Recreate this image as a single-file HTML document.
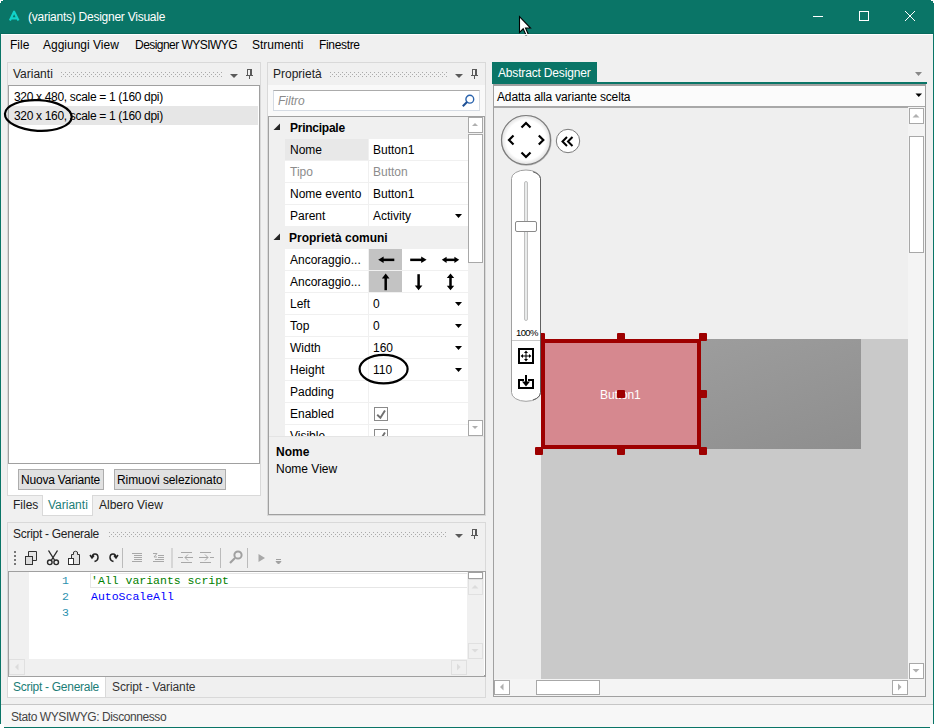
<!DOCTYPE html>
<html><head><meta charset="utf-8">
<style>
*{box-sizing:border-box;margin:0;padding:0}
html,body{width:934px;height:728px;overflow:hidden;background:#fff}
body{font-family:"Liberation Sans",sans-serif;font-size:12px;color:#000;position:relative}
.a{position:absolute}
.t{position:absolute;white-space:pre;line-height:14px}
#win{position:absolute;left:0;top:0;width:934px;height:728px;background:#f0f0f0;border:1px solid #0a7567;border-top:none}
#title{position:absolute;left:0;top:0;width:934px;height:34px;background:#0a7567;border-bottom:1px solid #076a5d}

</style></head><body>
<div id="win"></div>
<div id="title"></div>
<!-- rounded corners -->
<div class="a" style="left:0;top:0;width:3px;height:1px;background:#fff"></div>
<div class="a" style="left:0;top:0;width:1px;height:3px;background:#fff"></div>
<div class="a" style="left:931px;top:0;width:3px;height:1px;background:#fff"></div>
<div class="a" style="left:933px;top:0;width:1px;height:3px;background:#fff"></div>
<!-- title -->
<svg class="a" style="left:6px;top:8px" width="18" height="18"><path d="M3.9 12.5 L8.1 3.7 L12.5 12.5 M5.3 10.3 H11" stroke="#12d2c9" stroke-width="2.2" fill="none" stroke-linejoin="round"/></svg>
<div class="t" style="left:28px;top:10px;color:#fff;letter-spacing:-0.25px">(variants) Designer Visuale</div>
<!-- window controls -->
<svg class="a" style="left:800px;top:0" width="134" height="34">
<line x1="13" y1="16.5" x2="23" y2="16.5" stroke="#fff" stroke-width="1"/>
<rect x="59.5" y="11.5" width="9" height="9" fill="none" stroke="#fff" stroke-width="1"/>
<line x1="105" y1="11" x2="115" y2="21" stroke="#fff" stroke-width="1"/>
<line x1="115" y1="11" x2="105" y2="21" stroke="#fff" stroke-width="1"/>
</svg>
<!-- cursor -->
<svg class="a" style="left:518px;top:15px" width="16" height="22">
<path d="M1.5 1.5 V17.5 L5.2 13.8 L8 20 L10.2 19 L7.5 13 H12.5 Z" fill="#fff" stroke="#000" stroke-width="1.1" stroke-linejoin="miter"/>
</svg>
<!-- menu -->
<div class="a" style="left:1px;top:34px;width:932px;height:1px;background:#fff"></div>
<div class="t" style="left:10px;top:38px">File</div>
<div class="t" style="left:43px;top:38px">Aggiungi View</div>
<div class="t" style="left:135px;top:38px;letter-spacing:-0.54px">Designer WYSIWYG</div>
<div class="t" style="left:252px;top:38px">Strumenti</div>
<div class="t" style="left:319px;top:38px;letter-spacing:-0.33px">Finestre</div>


<!-- ===== Varianti panel ===== -->
<div class="a" style="left:7px;top:62px;width:254px;height:434px;border:1px solid #d9d9d9;background:#f0f0f0"></div>
<div class="t" style="left:13px;top:67px;color:#222">Varianti</div>
<svg class="a" style="left:61px;top:72px" width="162" height="6"><defs><pattern id="gp60_72" width="4" height="4" patternUnits="userSpaceOnUse"><rect x="0" y="0" width="1" height="1" fill="#ababab"/><rect x="2" y="2" width="1" height="1" fill="#ababab"/></pattern></defs><rect width="163" height="5" fill="url(#gp60_72)"/></svg>
<svg class="a" style="left:230px;top:73px" width="8" height="6"><path d="M0 1 L8 1 L4 5 Z" fill="#5a5a5a"/></svg>
<svg class="a" style="left:245px;top:68px" width="10" height="12"><rect x="2" y="1" width="5" height="1" fill="#5a5a5a"/><rect x="2" y="1" width="1" height="6" fill="#5a5a5a"/><rect x="5" y="1" width="2" height="6" fill="#5a5a5a"/><rect x="1" y="7" width="7" height="1" fill="#5a5a5a"/><rect x="4" y="8" width="1" height="3" fill="#5a5a5a"/></svg>
<div class="a" style="left:8px;top:85px;width:252px;height:379px;background:#fff;border:1px solid #a0a0a0;border-right-color:#a0a0a0"></div>
<div class="a" style="left:9px;top:106px;width:249px;height:19px;background:#e6e6e6"></div>
<div class="t" style="left:14px;top:90px;letter-spacing:-0.32px">320 x 480, scale = 1 (160 dpi)</div>
<div class="t" style="left:14px;top:109px;letter-spacing:-0.32px">320 x 160, scale = 1 (160 dpi)</div>
<div class="a" style="left:8px;top:464px;width:253px;height:32px;background:#fff;border-right:1px solid #d9d9d9;border-bottom:1px solid #d9d9d9"></div>
<div class="a" style="left:18px;top:469px;width:86px;height:21px;background:#e1e1e1;border:1px solid #adadad"></div>
<div class="t" style="left:21px;top:473px;letter-spacing:-0.2px">Nuova Variante</div>
<div class="a" style="left:114px;top:469px;width:112px;height:21px;background:#e1e1e1;border:1px solid #adadad"></div>
<div class="t" style="left:117px;top:473px;letter-spacing:-0.1px">Rimuovi selezionato</div>
<!-- tabs -->
<div class="a" style="left:42px;top:495px;width:51px;height:21px;background:#fff;border:1px solid #d9d9d9;border-top:none"></div>
<div class="t" style="left:13px;top:498px;color:#222">Files</div>
<div class="t" style="left:48px;top:498px;color:#1b7d76">Varianti</div>
<div class="t" style="left:99px;top:498px;color:#222">Albero View</div>

<!-- ===== Properties panel ===== -->
<div class="a" style="left:267px;top:62px;width:219px;height:454px;border:1px solid #d9d9d9;background:#f0f0f0"></div>
<div class="t" style="left:273px;top:67px;color:#222">Proprietà</div>
<svg class="a" style="left:330px;top:72px" width="118" height="6"><defs><pattern id="gp329_72" width="4" height="4" patternUnits="userSpaceOnUse"><rect x="0" y="0" width="1" height="1" fill="#ababab"/><rect x="2" y="2" width="1" height="1" fill="#ababab"/></pattern></defs><rect width="119" height="5" fill="url(#gp329_72)"/></svg>
<svg class="a" style="left:455px;top:73px" width="8" height="6"><path d="M0 1 L8 1 L4 5 Z" fill="#5a5a5a"/></svg>
<svg class="a" style="left:470px;top:68px" width="10" height="12"><rect x="2" y="1" width="5" height="1" fill="#5a5a5a"/><rect x="2" y="1" width="1" height="6" fill="#5a5a5a"/><rect x="5" y="1" width="2" height="6" fill="#5a5a5a"/><rect x="1" y="7" width="7" height="1" fill="#5a5a5a"/><rect x="4" y="8" width="1" height="3" fill="#5a5a5a"/></svg>
<div class="a" style="left:268px;top:85px;width:217px;height:31px;background:#f9f9f9"></div>
<div class="a" style="left:273px;top:90px;width:207px;height:21px;background:#fff;border:1px solid #d5dbe3;border-top-color:#ababab"></div>
<div class="t" style="left:278px;top:94px;color:#8a8a8a;font-style:italic">Filtro</div>
<svg class="a" style="left:460px;top:93px" width="16" height="16"><circle cx="9.8" cy="6.2" r="3.9" fill="none" stroke="#2a63ad" stroke-width="1.4"/><line x1="7" y1="9" x2="2.8" y2="13.2" stroke="#1d4f94" stroke-width="2"/></svg>
<div class="a" style="left:268px;top:116px;width:217px;height:399px;border:1px solid #a0a0a0;background:#f0f0f0"></div>
<div class="a" style="left:269px;top:117px;width:199px;height:319px;background:#f0f0f0;overflow:hidden">
<svg class="a" style="left:4px;top:6px" width="8" height="8"><path d="M7 0.5 L7 7 L0.5 7 Z" fill="#262626"/></svg><div class="t" style="left:21px;top:4px;font-weight:bold;letter-spacing:-0.25px">Principale</div><div class="a" style="left:16px;top:22px;width:83px;height:21px;background:#e8e8e8"></div><div class="a" style="left:100px;top:22px;width:99px;height:21px;background:#fff"></div><div class="t" style="left:21px;top:26px;color:#000">Nome</div><div class="t" style="left:104px;top:26px;color:#000">Button1</div><div class="a" style="left:16px;top:44px;width:83px;height:21px;background:#fff"></div><div class="a" style="left:100px;top:44px;width:99px;height:21px;background:#fff"></div><div class="t" style="left:21px;top:48px;color:#8c8c8c">Tipo</div><div class="t" style="left:104px;top:48px;color:#8c8c8c">Button</div><div class="a" style="left:16px;top:66px;width:83px;height:21px;background:#fff"></div><div class="a" style="left:100px;top:66px;width:99px;height:21px;background:#fff"></div><div class="t" style="left:21px;top:70px;color:#000">Nome evento</div><div class="t" style="left:104px;top:70px;color:#000">Button1</div><div class="a" style="left:16px;top:88px;width:83px;height:21px;background:#fff"></div><div class="a" style="left:100px;top:88px;width:99px;height:21px;background:#fff"></div><div class="t" style="left:21px;top:92px;color:#000">Parent</div><div class="t" style="left:104px;top:92px;color:#000">Activity</div><svg class="a" style="left:186px;top:97px" width="8" height="5"><path d="M0 0 L7 0 L3.5 4 Z" fill="#000"/></svg><svg class="a" style="left:4px;top:116px" width="8" height="8"><path d="M7 0.5 L7 7 L0.5 7 Z" fill="#262626"/></svg><div class="t" style="left:20px;top:114px;font-weight:bold">Proprietà comuni</div><div class="a" style="left:16px;top:132px;width:83px;height:21px;background:#fff"></div><div class="a" style="left:100px;top:132px;width:99px;height:21px;background:#fff"></div><div class="a" style="left:100px;top:132px;width:33px;height:21px;background:#c3c3c3"></div><div class="t" style="left:21px;top:136px">Ancoraggio...</div><svg class="a" style="left:100px;top:132px" width="99" height="21"><g fill="#000"><rect x="13" y="9.6" width="12.3" height="2.5"/><path d="M9.2 10.85 L14.6 7.6 L14.6 14.1 Z"/><rect x="41.2" y="9.6" width="12.3" height="2.5"/><path d="M57.6 10.85 L52.2 7.6 L52.2 14.1 Z"/><rect x="76" y="9.6" width="11" height="2.5"/><path d="M72.8 10.85 L77.6 7.8 L77.6 13.9 Z M90.2 10.85 L85.4 7.8 L85.4 13.9 Z"/></g></svg><div class="a" style="left:16px;top:154px;width:83px;height:21px;background:#fff"></div><div class="a" style="left:100px;top:154px;width:99px;height:21px;background:#fff"></div><div class="a" style="left:100px;top:154px;width:33px;height:21px;background:#c3c3c3"></div><div class="t" style="left:21px;top:158px">Ancoraggio...</div><svg class="a" style="left:100px;top:154px" width="99" height="21"><g fill="#000"><rect x="15.45" y="6" width="2.5" height="13.2"/><path d="M16.7 2.6 L12.9 7.4 L20.5 7.4 Z"/><rect x="48.35" y="3.2" width="2.5" height="13"/><path d="M49.6 19.2 L45.8 14.4 L53.4 14.4 Z"/><rect x="80.25" y="5.5" width="2.5" height="11"/><path d="M81.5 2.5 L77.8 7 L85.2 7 Z M81.5 19.2 L77.8 14.7 L85.2 14.7 Z"/></g></svg><div class="a" style="left:16px;top:176px;width:83px;height:21px;background:#fff"></div><div class="a" style="left:100px;top:176px;width:99px;height:21px;background:#fff"></div><div class="t" style="left:21px;top:180px">Left</div><div class="t" style="left:104px;top:180px">0</div><svg class="a" style="left:186px;top:185px" width="8" height="5"><path d="M0 0 L7 0 L3.5 4 Z" fill="#000"/></svg><div class="a" style="left:16px;top:198px;width:83px;height:21px;background:#fff"></div><div class="a" style="left:100px;top:198px;width:99px;height:21px;background:#fff"></div><div class="t" style="left:21px;top:202px">Top</div><div class="t" style="left:104px;top:202px">0</div><svg class="a" style="left:186px;top:207px" width="8" height="5"><path d="M0 0 L7 0 L3.5 4 Z" fill="#000"/></svg><div class="a" style="left:16px;top:220px;width:83px;height:21px;background:#fff"></div><div class="a" style="left:100px;top:220px;width:99px;height:21px;background:#fff"></div><div class="t" style="left:21px;top:224px">Width</div><div class="t" style="left:104px;top:224px">160</div><svg class="a" style="left:186px;top:229px" width="8" height="5"><path d="M0 0 L7 0 L3.5 4 Z" fill="#000"/></svg><div class="a" style="left:16px;top:242px;width:83px;height:21px;background:#fff"></div><div class="a" style="left:100px;top:242px;width:99px;height:21px;background:#fff"></div><div class="t" style="left:21px;top:246px">Height</div><div class="t" style="left:104px;top:246px">110</div><svg class="a" style="left:186px;top:251px" width="8" height="5"><path d="M0 0 L7 0 L3.5 4 Z" fill="#000"/></svg><div class="a" style="left:16px;top:264px;width:83px;height:21px;background:#fff"></div><div class="a" style="left:100px;top:264px;width:99px;height:21px;background:#fff"></div><div class="t" style="left:21px;top:268px">Padding</div><div class="a" style="left:16px;top:286px;width:83px;height:21px;background:#fff"></div><div class="a" style="left:100px;top:286px;width:99px;height:21px;background:#fff"></div><div class="t" style="left:21px;top:290px">Enabled</div><svg class="a" style="left:105px;top:290px" width="15" height="15"><rect x="0.5" y="0.5" width="13" height="13" fill="#fff" stroke="#8a8a8a"/><path d="M3.2 7.8 L6.4 10.8 L11 3.4" stroke="#707070" stroke-width="1.9" fill="none"/></svg><div class="a" style="left:16px;top:308px;width:83px;height:21px;background:#fff"></div><div class="a" style="left:100px;top:308px;width:99px;height:21px;background:#fff"></div><div class="t" style="left:21px;top:312px">Visible</div><svg class="a" style="left:105px;top:312px" width="15" height="15"><rect x="0.5" y="0.5" width="13" height="13" fill="#fff" stroke="#8a8a8a"/><path d="M3.2 7.8 L6.4 10.8 L11 3.4" stroke="#707070" stroke-width="1.9" fill="none"/></svg></div>
<div class="a" style="left:468px;top:117px;width:16px;height:319px;background:#f0f0f0"></div>
<div class="a" style="left:468px;top:117px;width:15px;height:16px;background:#fff;border:1px solid #a8a8a8"></div>
<svg class="a" style="left:472px;top:122px" width="8" height="6"><path d="M0 4 L6 4 L3 1 Z" fill="#b0b0b0"/></svg>
<div class="a" style="left:468px;top:134px;width:15px;height:129px;background:#fff;border:1px solid #a8a8a8"></div>
<div class="a" style="left:468px;top:420px;width:15px;height:16px;background:#fff;border:1px solid #a8a8a8"></div>
<svg class="a" style="left:472px;top:425px" width="8" height="6"><path d="M0 1 L6 1 L3 4 Z" fill="#b0b0b0"/></svg>
<div class="a" style="left:269px;top:436px;width:215px;height:1px;background:#e4e4e4"></div>
<div class="t" style="left:276px;top:445px;font-weight:bold">Nome</div>
<div class="t" style="left:276px;top:462px">Nome View</div>

<!-- ===== Designer ===== -->
<div class="a" style="left:492px;top:62px;width:105px;height:21px;background:#0a7567"></div>
<div class="t" style="left:498px;top:66px;color:#fff;letter-spacing:-0.17px">Abstract Designer</div>
<svg class="a" style="left:914px;top:71px" width="10" height="7"><path d="M1 1 L8 1 L4.5 5 Z" fill="#888"/></svg>
<div class="a" style="left:492px;top:82px;width:435px;height:2px;background:#0a7567"></div>
<div class="a" style="left:493px;top:84px;width:433px;height:613px;border:1px solid #a0a0a0;border-width:2px 2px 2px 1px;background:#efefef"></div>
<div class="a" style="left:494px;top:86px;width:431px;height:22px;background:#fbfbfb;border-bottom:2px solid #a8a8a8"></div>
<div class="t" style="left:497px;top:90px;letter-spacing:-0.15px">Adatta alla variante scelta</div>
<svg class="a" style="left:915px;top:93px" width="8" height="6"><path d="M0.5 0.5 L7 0.5 L3.75 4 Z" fill="#000"/></svg>
<!-- canvas -->
<div class="a" style="left:541px;top:339px;width:367px;height:340px;background:#c9c9c9"></div>
<div class="a" style="left:541px;top:339px;width:320px;height:110px;background:linear-gradient(160deg,#a2a2a2,#8e8e8e)"></div>
<div class="a" style="left:541px;top:339px;width:160px;height:110px;background:#d6888f;border:4px solid #9e0000"></div>
<div class="t" style="left:600px;top:388px;color:#fff;letter-spacing:-0.1px">Button1</div>
<div class="a" style="left:537px;top:333px;width:8px;height:8px;background:#9e0000;border-radius:1px"></div>
<div class="a" style="left:617px;top:333px;width:8px;height:8px;background:#9e0000;border-radius:1px"></div>
<div class="a" style="left:699px;top:333px;width:8px;height:8px;background:#9e0000;border-radius:1px"></div>
<div class="a" style="left:699px;top:390px;width:8px;height:8px;background:#9e0000;border-radius:1px"></div>
<div class="a" style="left:617px;top:390px;width:8px;height:8px;background:#9e0000;border-radius:1px"></div>
<div class="a" style="left:535px;top:447px;width:8px;height:8px;background:#9e0000;border-radius:1px"></div>
<div class="a" style="left:617px;top:447px;width:8px;height:8px;background:#9e0000;border-radius:1px"></div>
<div class="a" style="left:699px;top:447px;width:8px;height:8px;background:#9e0000;border-radius:1px"></div>
<!-- scrollbars -->
<div class="a" style="left:908px;top:107px;width:17px;height:572px;background:#f4f4f4"></div>
<div class="a" style="left:494px;top:679px;width:431px;height:17px;background:#f4f4f4"></div>
<div class="a" style="left:909px;top:108px;width:15px;height:16px;background:#fff;border:1px solid #a8a8a8"></div>
<svg class="a" style="left:912px;top:113px" width="9" height="6"><path d="M0.5 4.5 L7.5 4.5 L4 1 Z" fill="#b0b0b0"/></svg>
<div class="a" style="left:909px;top:136px;width:15px;height:117px;background:#fff;border:1px solid #a8a8a8"></div>
<div class="a" style="left:909px;top:663px;width:15px;height:16px;background:#fff;border:1px solid #a8a8a8"></div>
<svg class="a" style="left:912px;top:668px" width="9" height="6"><path d="M0.5 1 L7.5 1 L4 4.5 Z" fill="#b0b0b0"/></svg>
<div class="a" style="left:494px;top:680px;width:16px;height:15px;background:#fff;border:1px solid #a8a8a8"></div>
<svg class="a" style="left:499px;top:683px" width="6" height="9"><path d="M4.5 0.5 L4.5 7.5 L1 4 Z" fill="#b0b0b0"/></svg>
<div class="a" style="left:536px;top:680px;width:64px;height:15px;background:#fff;border:1px solid #a8a8a8"></div>
<div class="a" style="left:892px;top:680px;width:16px;height:15px;background:#fff;border:1px solid #a8a8a8"></div>
<svg class="a" style="left:897px;top:683px" width="6" height="9"><path d="M1 0.5 L1 7.5 L4.5 4 Z" fill="#b0b0b0"/></svg>
<!-- navigator -->
<svg class="a" style="left:495px;top:108px" width="100" height="300">
<defs><radialGradient id="cg" cx="50%" cy="50%" r="50%"><stop offset="80%" stop-color="#fff"/><stop offset="100%" stop-color="#e2e2e2"/></radialGradient></defs>
<circle cx="31.3" cy="32.4" r="24.6" fill="none" stroke="#9a9a9a" stroke-width="1.4" opacity="0.7"/><circle cx="31" cy="32" r="24.5" fill="url(#cg)" stroke="#7c7c7c" stroke-width="1.2"/>
<path d="M26.5 19.5 L31 15 L35.5 19.5" stroke="#000" stroke-width="2.2" fill="none"/>
<path d="M26.5 44.5 L31 49 L35.5 44.5" stroke="#000" stroke-width="2.2" fill="none"/>
<path d="M18.5 27.5 L14 32 L18.5 36.5" stroke="#000" stroke-width="2.2" fill="none"/>
<path d="M43.8 27.5 L48.3 32 L43.8 36.5" stroke="#000" stroke-width="2.2" fill="none"/>
<circle cx="73" cy="33" r="11.7" fill="#fff" stroke="#7a7a7a" stroke-width="1"/>
<path d="M72 29 L67.5 33.5 L72 38 M77.5 29 L73 33.5 L77.5 38" stroke="#000" stroke-width="2" fill="none"/>
<path d="M16.5 70.5 A14.5 8.5 0 0 1 45.5 70.5 V284.5 A14.5 8.8 0 0 1 16.5 284.5 Z" fill="#fff" stroke="#a0a0a0" stroke-width="1"/>
<path d="M38 63.8 A14.5 8.5 0 0 1 45.5 70.5 V284.5 A14.5 8.8 0 0 1 38 292" fill="none" stroke="#606060" stroke-width="1"/>
<rect x="29.5" y="73.5" width="3" height="139" rx="1.5" fill="#e8eaea" stroke="#c0c0c0" stroke-width="1"/>
<rect x="20.5" y="113.5" width="21" height="10" rx="1.5" fill="#fff" stroke="#8a8a8a" stroke-width="1"/>
<line x1="17" y1="232.5" x2="45" y2="232.5" stroke="#c8c8c8"/>
<rect x="24" y="241" width="14" height="14" fill="none" stroke="#000" stroke-width="2"/>
<path d="M31 244.5 V251.5 M27.5 248 H34.5" stroke="#000" stroke-width="1"/>
<path d="M31 242.6 L29 245 H33 Z M31 253.4 L29 251 H33 Z M25.6 248 L28 246 V250 Z M36.4 248 L34 246 V250 Z" fill="#000"/>
<path d="M29 272 H24 V280 H38 V272 H33" stroke="#000" stroke-width="2" fill="none"/>
<path d="M31 267 V275" stroke="#000" stroke-width="2"/>
<path d="M27 273.5 H35 L31 278.5 Z" fill="#000"/>
</svg>
<div class="t" style="left:516px;top:327px;font-size:9.5px;line-height:11px;letter-spacing:-0.65px">100%</div>

<!-- ===== Script panel ===== -->
<div class="a" style="left:7px;top:522px;width:479px;height:176px;border:1px solid #d9d9d9;background:#f0f0f0"></div>
<div class="t" style="left:13px;top:527px;color:#222;letter-spacing:-0.28px">Script - Generale</div>
<svg class="a" style="left:109px;top:532px" width="338" height="6"><defs><pattern id="gp108_531" width="4" height="4" patternUnits="userSpaceOnUse"><rect x="0" y="0" width="1" height="1" fill="#ababab"/><rect x="2" y="2" width="1" height="1" fill="#ababab"/></pattern></defs><rect width="339" height="5" fill="url(#gp108_531)"/></svg>
<svg class="a" style="left:455px;top:533px" width="8" height="6"><path d="M0 1 L8 1 L4 5 Z" fill="#5a5a5a"/></svg>
<svg class="a" style="left:470px;top:528px" width="10" height="12"><rect x="2" y="1" width="5" height="1" fill="#5a5a5a"/><rect x="2" y="1" width="1" height="6" fill="#5a5a5a"/><rect x="5" y="1" width="2" height="6" fill="#5a5a5a"/><rect x="1" y="7" width="7" height="1" fill="#5a5a5a"/><rect x="4" y="8" width="1" height="3" fill="#5a5a5a"/></svg>
<!-- toolbar -->
<svg class="a" style="left:8px;top:545px" width="290" height="26">
<g fill="#777"><rect x="6" y="6" width="2" height="2"/><rect x="6" y="10" width="2" height="2"/><rect x="6" y="14" width="2" height="2"/><rect x="6" y="18" width="2" height="2"/></g>
<g stroke="#333" stroke-width="1" fill="none">
<path d="M20.5 11.5 V6.5 H28.5 V15.5 H24.5" fill="#e6e6e6"/><rect x="17.5" y="11.5" width="7" height="8" fill="#dcdcdc"/>
</g>
<g stroke="#2a2a2a" stroke-width="1.4" fill="none">
<path d="M40.5 5.5 L46.5 15 M49.5 5.5 L43.5 15"/><circle cx="41.8" cy="17.3" r="2.3"/><circle cx="48.2" cy="17.3" r="2.3"/>
</g>
<g stroke="#333" stroke-width="1" fill="none">
<path d="M63.5 19.5 H71.5 V9.5 H69.5 V7 Q67.5 5.5 65.5 7 V9.5 H63.5 Z" fill="#e2e2e2"/><rect x="60.5" y="13.5" width="5" height="6" fill="#fff"/>
</g>
<path d="M84 13 Q84 9 87 9 Q90 9 90 12.5 Q90 15.5 86.5 16.5 M82 10 L84 13 L86 10.5" stroke="#222" stroke-width="1.5" fill="none"/>
<path d="M108 13 Q108 9 105 9 Q102 9 102 12.5 Q102 15.5 105.5 16.5 M110 10 L108 13 L106 10.5" stroke="#222" stroke-width="1.5" fill="none"/>
<g fill="#bbb"><rect x="114" y="3" width="1" height="20"/><rect x="163.5" y="3" width="1" height="20"/><rect x="212" y="3" width="1" height="20"/><rect x="239" y="3" width="1" height="20"/></g>
<g stroke="#a8a8a8" stroke-width="1" fill="none">
<path d="M124 8.5 H134 M126 10.5 H134 M126 12.5 H134 M126 14.5 H134 M124 16.5 H134"/>
<path d="M145 8.5 H149 L146 12 H149 M150 10.5 H156 M150 12.5 H156 M147 14.5 H156 M145 16.5 H156"/>
<path d="M173 7.5 H184 M170 12.5 H175 M177 12.5 H185 M173 17.5 H184 M180 9.5 L177 12.5 L180 15.5"/>
<path d="M192 7.5 H203 M191 12.5 H200 M202 12.5 H206 M192 17.5 H203 M197 9.5 L200 12.5 L197 15.5"/>
</g>
<circle cx="230" cy="10" r="3.6" stroke="#a0a0a0" stroke-width="2" fill="none"/>
<path d="M227 13 L222 18" stroke="#a0a0a0" stroke-width="2.2"/>
<path d="M250.5 9 V17 L257 13 Z" fill="#a8a8a8"/>
<path d="M268 14.5 H273 M268 16.5 L270.5 19 L273 16.5 Z" stroke="#a0a0a0" stroke-width="1" fill="#a0a0a0"/>
</svg>
<!-- editor -->
<div class="a" style="left:8px;top:571px;width:478px;height:106px;border:1px solid #a0a0a0;border-width:1px 1px 2px 1px;background:#fff"></div>
<div class="a" style="left:9px;top:572px;width:20px;height:87px;background:#f0f0f0"></div>
<div class="a" style="left:90px;top:573px;width:377px;height:15px;border:1px solid #e6e6e6;border-right:none"></div>
<div class="a" style="left:9px;top:659px;width:475px;height:17px;background:#f0f0f0"></div>
<div class="a" style="left:467px;top:572px;width:17px;height:88px;background:#f0f0f0"></div>
<div class="a" style="left:468px;top:572px;width:15px;height:7px;background:#fff;border:1px solid #a0a0a0"></div>
<div class="a" style="left:468px;top:579px;width:15px;height:16px;border:1px solid #e0e0e0"></div>
<svg class="a" style="left:471px;top:584px" width="9" height="6"><path d="M0.5 4.5 L7.5 4.5 L4 1 Z" fill="#dcdcdc"/></svg>
<div class="a" style="left:468px;top:643px;width:15px;height:16px;border:1px solid #e0e0e0"></div>
<svg class="a" style="left:471px;top:648px" width="9" height="6"><path d="M0.5 1 L7.5 1 L4 4.5 Z" fill="#dcdcdc"/></svg>
<div class="a" style="left:9px;top:659px;width:16px;height:16px;border:1px solid #e0e0e0"></div>
<svg class="a" style="left:14px;top:663px" width="6" height="9"><path d="M4.5 0.5 L4.5 7.5 L1 4 Z" fill="#dcdcdc"/></svg>
<div class="a" style="left:451px;top:660px;width:16px;height:15px;border:1px solid #e0e0e0"></div>
<svg class="a" style="left:456px;top:663px" width="6" height="9"><path d="M1 0.5 L1 7.5 L4.5 4 Z" fill="#dcdcdc"/></svg>
<div class="t" style="left:62px;top:573px;font-family:'Liberation Mono',monospace;font-size:11.5px;color:#2b91af;line-height:16px">1
2
3</div>
<div class="t" style="left:91px;top:573px;font-family:'Liberation Mono',monospace;font-size:11.5px;line-height:16px"><span style="color:#008000">'All variants script</span>
<span style="color:#0000ff">AutoScaleAll</span></div>
<!-- script tabs -->
<div class="a" style="left:7px;top:677px;width:99px;height:21px;background:#fff;border:1px solid #d9d9d9;border-top:none"></div>
<div class="t" style="left:13px;top:680px;color:#1b7d76;letter-spacing:-0.28px">Script - Generale</div>
<div class="t" style="left:112px;top:680px;color:#333;letter-spacing:-0.1px">Script - Variante</div>
<!-- status -->
<div class="a" style="left:1px;top:704px;width:932px;height:1px;background:#c6c6c6"></div>
<div class="a" style="left:1px;top:705px;width:932px;height:22px;background:#f7f7f7"></div>
<div class="t" style="left:11px;top:710px;color:#444;letter-spacing:-0.42px">Stato WYSIWYG: Disconnesso</div>
<div class="a" style="left:0;top:724px;width:4px;height:4px;background:#fff"></div>
<div class="a" style="left:930px;top:724px;width:4px;height:4px;background:#fff"></div>
<!-- ellipses -->
<svg class="a" style="left:0;top:95px" width="80" height="40"><ellipse cx="38.3" cy="20.5" rx="33.4" ry="15.3" fill="none" stroke="#000" stroke-width="2.2" transform="rotate(3 38.3 20.5)"/></svg>
<svg class="a" style="left:355px;top:350px" width="60" height="40"><ellipse cx="28.6" cy="19.1" rx="24" ry="14.3" fill="none" stroke="#000" stroke-width="2.2"/></svg>
</body></html>
